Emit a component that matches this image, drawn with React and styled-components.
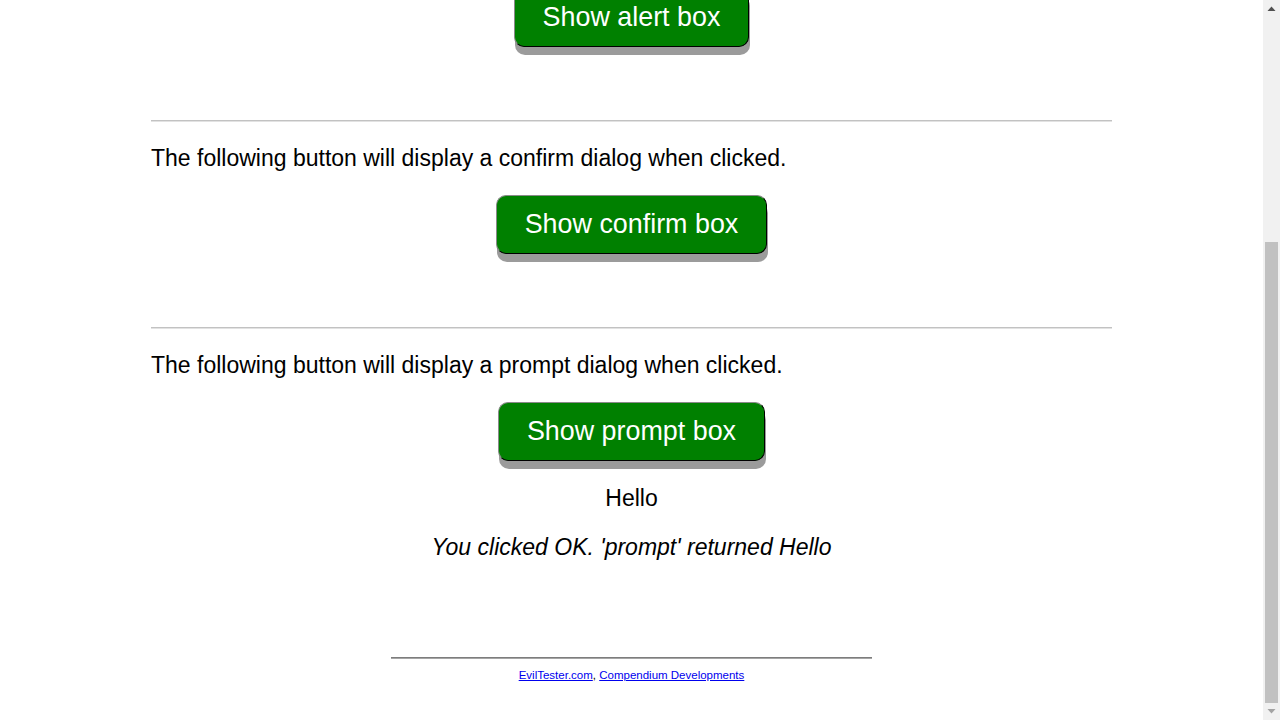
import React, { useLayoutEffect, useRef, useState } from "react";
import styled, { createGlobalStyle } from "styled-components";

const Global = createGlobalStyle`
  html, body { height: 100%; }
  body {
    margin: 0;
    overflow: hidden;
    background: #fff;
    color: #000;
    font-family: "Liberation Sans", Arial, sans-serif;
  }
`;

const Window = styled.div`
  display: flex;
  height: 100vh;
`;

const Scroller = styled.div`
  flex: 1;
  min-width: 0;
  overflow-y: auto;
  overflow-x: hidden;
  scrollbar-width: none;
  &::-webkit-scrollbar { display: none; }
`;

const ScrollBar = styled.div`
  width: 17px;
  flex: none;
  display: flex;
  flex-direction: column;
  background: #f1f1f1;
`;

const ArrowButton = styled.div`
  height: 17px;
  flex: none;
  display: flex;
  align-items: center;
  justify-content: center;
  color: ${(p) => (p.$disabled ? "#a3a3a3" : "#505050")};
`;

const Track = styled.div`
  flex: 1;
  display: flex;
  flex-direction: column;
  justify-content: flex-end;
`;

const Thumb = styled.div`
  margin: 0 2px;
  background: #c1c1c1;
`;

const Page = styled.div`
  width: 961px;
  margin: 0 auto;
  font-size: 23px;
`;

const Header = styled.header`
  height: 264px;
  display: flex;
  flex-direction: column;
  justify-content: flex-start;
`;

const Title = styled.h1`
  font-size: 36px;
  font-weight: bold;
  margin: 40px 0 24px;
  text-align: center;
`;

const Intro = styled.p`
  margin: 0;
  font-size: 23px;
`;

const Divider = styled.hr`
  margin: 0;
  height: 0;
  border: 0;
  border-top: 1px solid #c2c2c2;
  border-bottom: 1px solid #e2e2e2;
`;

const Text = styled.p`
  margin: 23px 0 24px;
  line-height: 26px;
`;

const ButtonRow = styled.div`
  text-align: center;
  padding-bottom: ${(p) => p.$after}px;
`;

const GreenButton = styled.button`
  font-family: "Liberation Sans", Arial, sans-serif;
  font-size: 26.88px;
  line-height: 31px;
  color: #fff;
  background: #008000;
  padding: 13px 28px;
  border: 1px solid;
  border-color: #8a8a8a #000 #000 #8a8a8a;
  border-radius: 10px;
  box-shadow: 1px 8px 0 #9b9b9b;
  cursor: pointer;
  vertical-align: top;
`;

const Result = styled.p`
  margin: 0;
  text-align: center;
  line-height: 26px;
  font-style: ${(p) => (p.$italic ? "italic" : "normal")};
  margin-top: ${(p) => p.$top}px;
`;

const Footer = styled.footer`
  margin-top: 97px;
  padding-bottom: 38px;
  text-align: center;
`;

const FooterRule = styled.hr`
  width: 50%;
  margin: 0 auto;
  height: 0;
  border: 0;
  border-top: 1px solid #7d7d7d;
  border-bottom: 1px solid #a5a5a5;
`;

const FooterLinks = styled.p`
  margin: 9px 0 0;
  font-size: 11.5px;
  line-height: 14px;
`;

const Link = styled.a`
  color: #0000ee;
  text-decoration: underline;
`;

const sections = [
  { text: "The following button will display an alert when clicked.", label: "Show alert box" },
  { text: "The following button will display a confirm dialog when clicked.", label: "Show confirm box" },
  { text: "The following button will display a prompt dialog when clicked.", label: "Show prompt box" },
];

const Triangle = ({ down }) => (
  <svg width="9" height="5" viewBox="0 0 9 5" fill="currentColor">
    {down ? <polygon points="0.5,0 8.5,0 4.5,4.5" /> : <polygon points="4.5,0.5 8.5,5 0.5,5" />}
  </svg>
);

export default function App() {
  const ref = useRef(null);
  const [thumb, setThumb] = useState(461);

  useLayoutEffect(() => {
    const el = ref.current;
    if (!el) return;
    const update = () => {
      el.scrollTop = el.scrollHeight;
      const track = el.clientHeight - 34;
      setThumb(Math.round((el.clientHeight / el.scrollHeight) * track));
    };
    update();
    const id = requestAnimationFrame(update);
    return () => cancelAnimationFrame(id);
  }, []);

  return (
    <>
      <Global />
      <Window>
        <Scroller ref={ref}>
          <Page>
            <Header>
              <Title>Alert Box Examples</Title>
              <Intro>
                There are three main JavaScript methods which show dialogs: alert,
                confirm and prompt. This page has examples of each.
              </Intro>
            </Header>
            {sections.map((s, i) => (
              <section key={s.label}>
                <Divider />
                <Text>{s.text}</Text>
                <ButtonRow $after={i < 2 ? 73 : 0}>
                  <GreenButton type="button">{s.label}</GreenButton>
                </ButtonRow>
              </section>
            ))}
            <Result $top={24}>Hello</Result>
            <Result $italic $top={23}>
              You clicked OK. 'prompt' returned Hello
            </Result>
            <Footer>
              <FooterRule />
              <FooterLinks>
                <Link href="#">EvilTester.com</Link>,{" "}
                <Link href="#">Compendium Developments</Link>
              </FooterLinks>
            </Footer>
          </Page>
        </Scroller>
        <ScrollBar>
          <ArrowButton>
            <Triangle />
          </ArrowButton>
          <Track>
            <Thumb style={{ height: thumb }} />
          </Track>
          <ArrowButton $disabled>
            <Triangle down />
          </ArrowButton>
        </ScrollBar>
      </Window>
    </>
  );
}
